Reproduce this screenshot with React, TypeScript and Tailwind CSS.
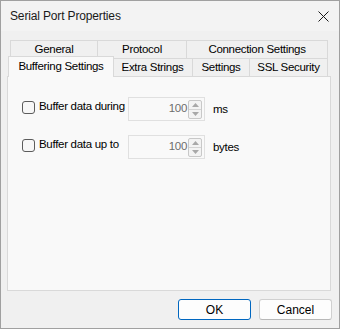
import React from "react";

const font = { fontFamily: '"Liberation Sans", Arial, sans-serif' };

function Tab({ label, w, last }: { label: string; w: string; last?: boolean }) {
  return (
    <div
      className={`${w} h-full flex items-center justify-center border-t border-l border-[#d9d9d9] ${
        last ? "border-r" : ""
      } bg-[#f0f0f0] text-[11.5px] tracking-[-0.3px] text-[#000]`}
    >
      {label}
    </div>
  );
}

function Spin({ value }: { value: string }) {
  return (
    <div className="w-[77px] h-[24px] border border-[#e0e0e0] bg-[#f9f9f9] flex items-center pr-[2px]">
      <div className="flex-1 text-right pr-[1px] text-[11.5px] tracking-[-0.3px] text-[#6d6d6d]">
        {value}
      </div>
      <div className="w-[14px] h-[19px] flex flex-col border border-[#c8c8c8] rounded-[2px] bg-[#f3f3f3]">
        <div className="flex-1 flex items-center justify-center border-b border-[#d4d4d4]">
          <svg width="7" height="4" viewBox="0 0 7 4">
            <path d="M0 4 L3.5 0 L7 4 Z" fill="#a8a8a8" />
          </svg>
        </div>
        <div className="flex-1 flex items-center justify-center">
          <svg width="7" height="4" viewBox="0 0 7 4">
            <path d="M0 0 L3.5 4 L7 0 Z" fill="#a8a8a8" />
          </svg>
        </div>
      </div>
    </div>
  );
}

function Row({ label, value, unit }: { label: string; value: string; unit: string }) {
  return (
    <div className="h-[24px] flex items-center">
      <div className="w-[106px] flex items-center gap-[4px] mb-[4px]">
        <div className="w-[13px] h-[13px] rounded-[3px] border border-[#5c5c5c] bg-[#f7f7f7]" />
        <span className="text-[11.5px] tracking-[-0.3px] text-[#000]">{label}</span>
      </div>
      <Spin value={value} />
      <span className="ml-[8px] mt-[1px] text-[11.5px] tracking-[-0.3px] text-[#000]">{unit}</span>
    </div>
  );
}

export default function App() {
  return (
    <div
      style={font}
      className="w-[340px] h-[329px] border border-[#a0a0a0] bg-[#f0f0f0] flex flex-col"
    >
      <div className="h-[30px] bg-[#f3f3f3] flex items-center justify-between pl-[9px] pr-[10px]">
        <span className="text-[12px] text-[#1a1a1a] tracking-[-0.15px]">Serial Port Properties</span>
        <svg width="11" height="11" viewBox="0 0 11 11">
          <path d="M0.5 0.5 L10.5 10.5 M10.5 0.5 L0.5 10.5" stroke="#1a1a1a" strokeWidth="1" />
        </svg>
      </div>
      <div className="flex-1 flex flex-col pt-[9px] pl-[6px] pr-[7px]">
        <div className="h-[36px] pl-[3px] flex flex-col">
          <div className="h-[18px] flex">
            <Tab label="General" w="w-[87px]" />
            <Tab label="Protocol" w="w-[89px]" />
            <Tab label="Connection Settings" w="w-[142px]" last />
          </div>
          <div className="h-[18px] flex">
            <div className="w-[106px] h-[21px] -mx-[2px] -mt-[2px] relative z-10 flex items-center justify-center border-t border-l border-r border-[#d9d9d9] bg-[#f9f9f9] text-[11.5px] tracking-[-0.3px] text-[#000]">
              Buffering Settings
            </div>
            <Tab label="Extra Strings" w="w-[80px]" />
            <Tab label="Settings" w="w-[57px]" />
            <Tab label="SSL Security" w="w-[79px]" last />
          </div>
        </div>
        <div className="w-[324px] h-[215px] border border-[#d9d9d9] bg-[#f9f9f9] pt-[20px] pl-[14px] flex flex-col gap-[14px]">
          <Row label="Buffer data during" value="100" unit="ms" />
          <Row label="Buffer data up to" value="100" unit="bytes" />
        </div>
        <div className="mt-[8px] flex justify-end gap-[8px]">
          <button className="w-[73px] h-[21px] rounded-[3px] border border-[#0067c0] bg-[#fdfdfd] text-[12px] text-[#000] flex items-center justify-center">
            OK
          </button>
          <button className="w-[73px] h-[21px] rounded-[3px] border border-[#d0d0d0] border-b-[#b8b8b8] bg-[#fdfdfd] text-[12px] text-[#000] flex items-center justify-center">
            Cancel
          </button>
        </div>
      </div>
    </div>
  );
}
